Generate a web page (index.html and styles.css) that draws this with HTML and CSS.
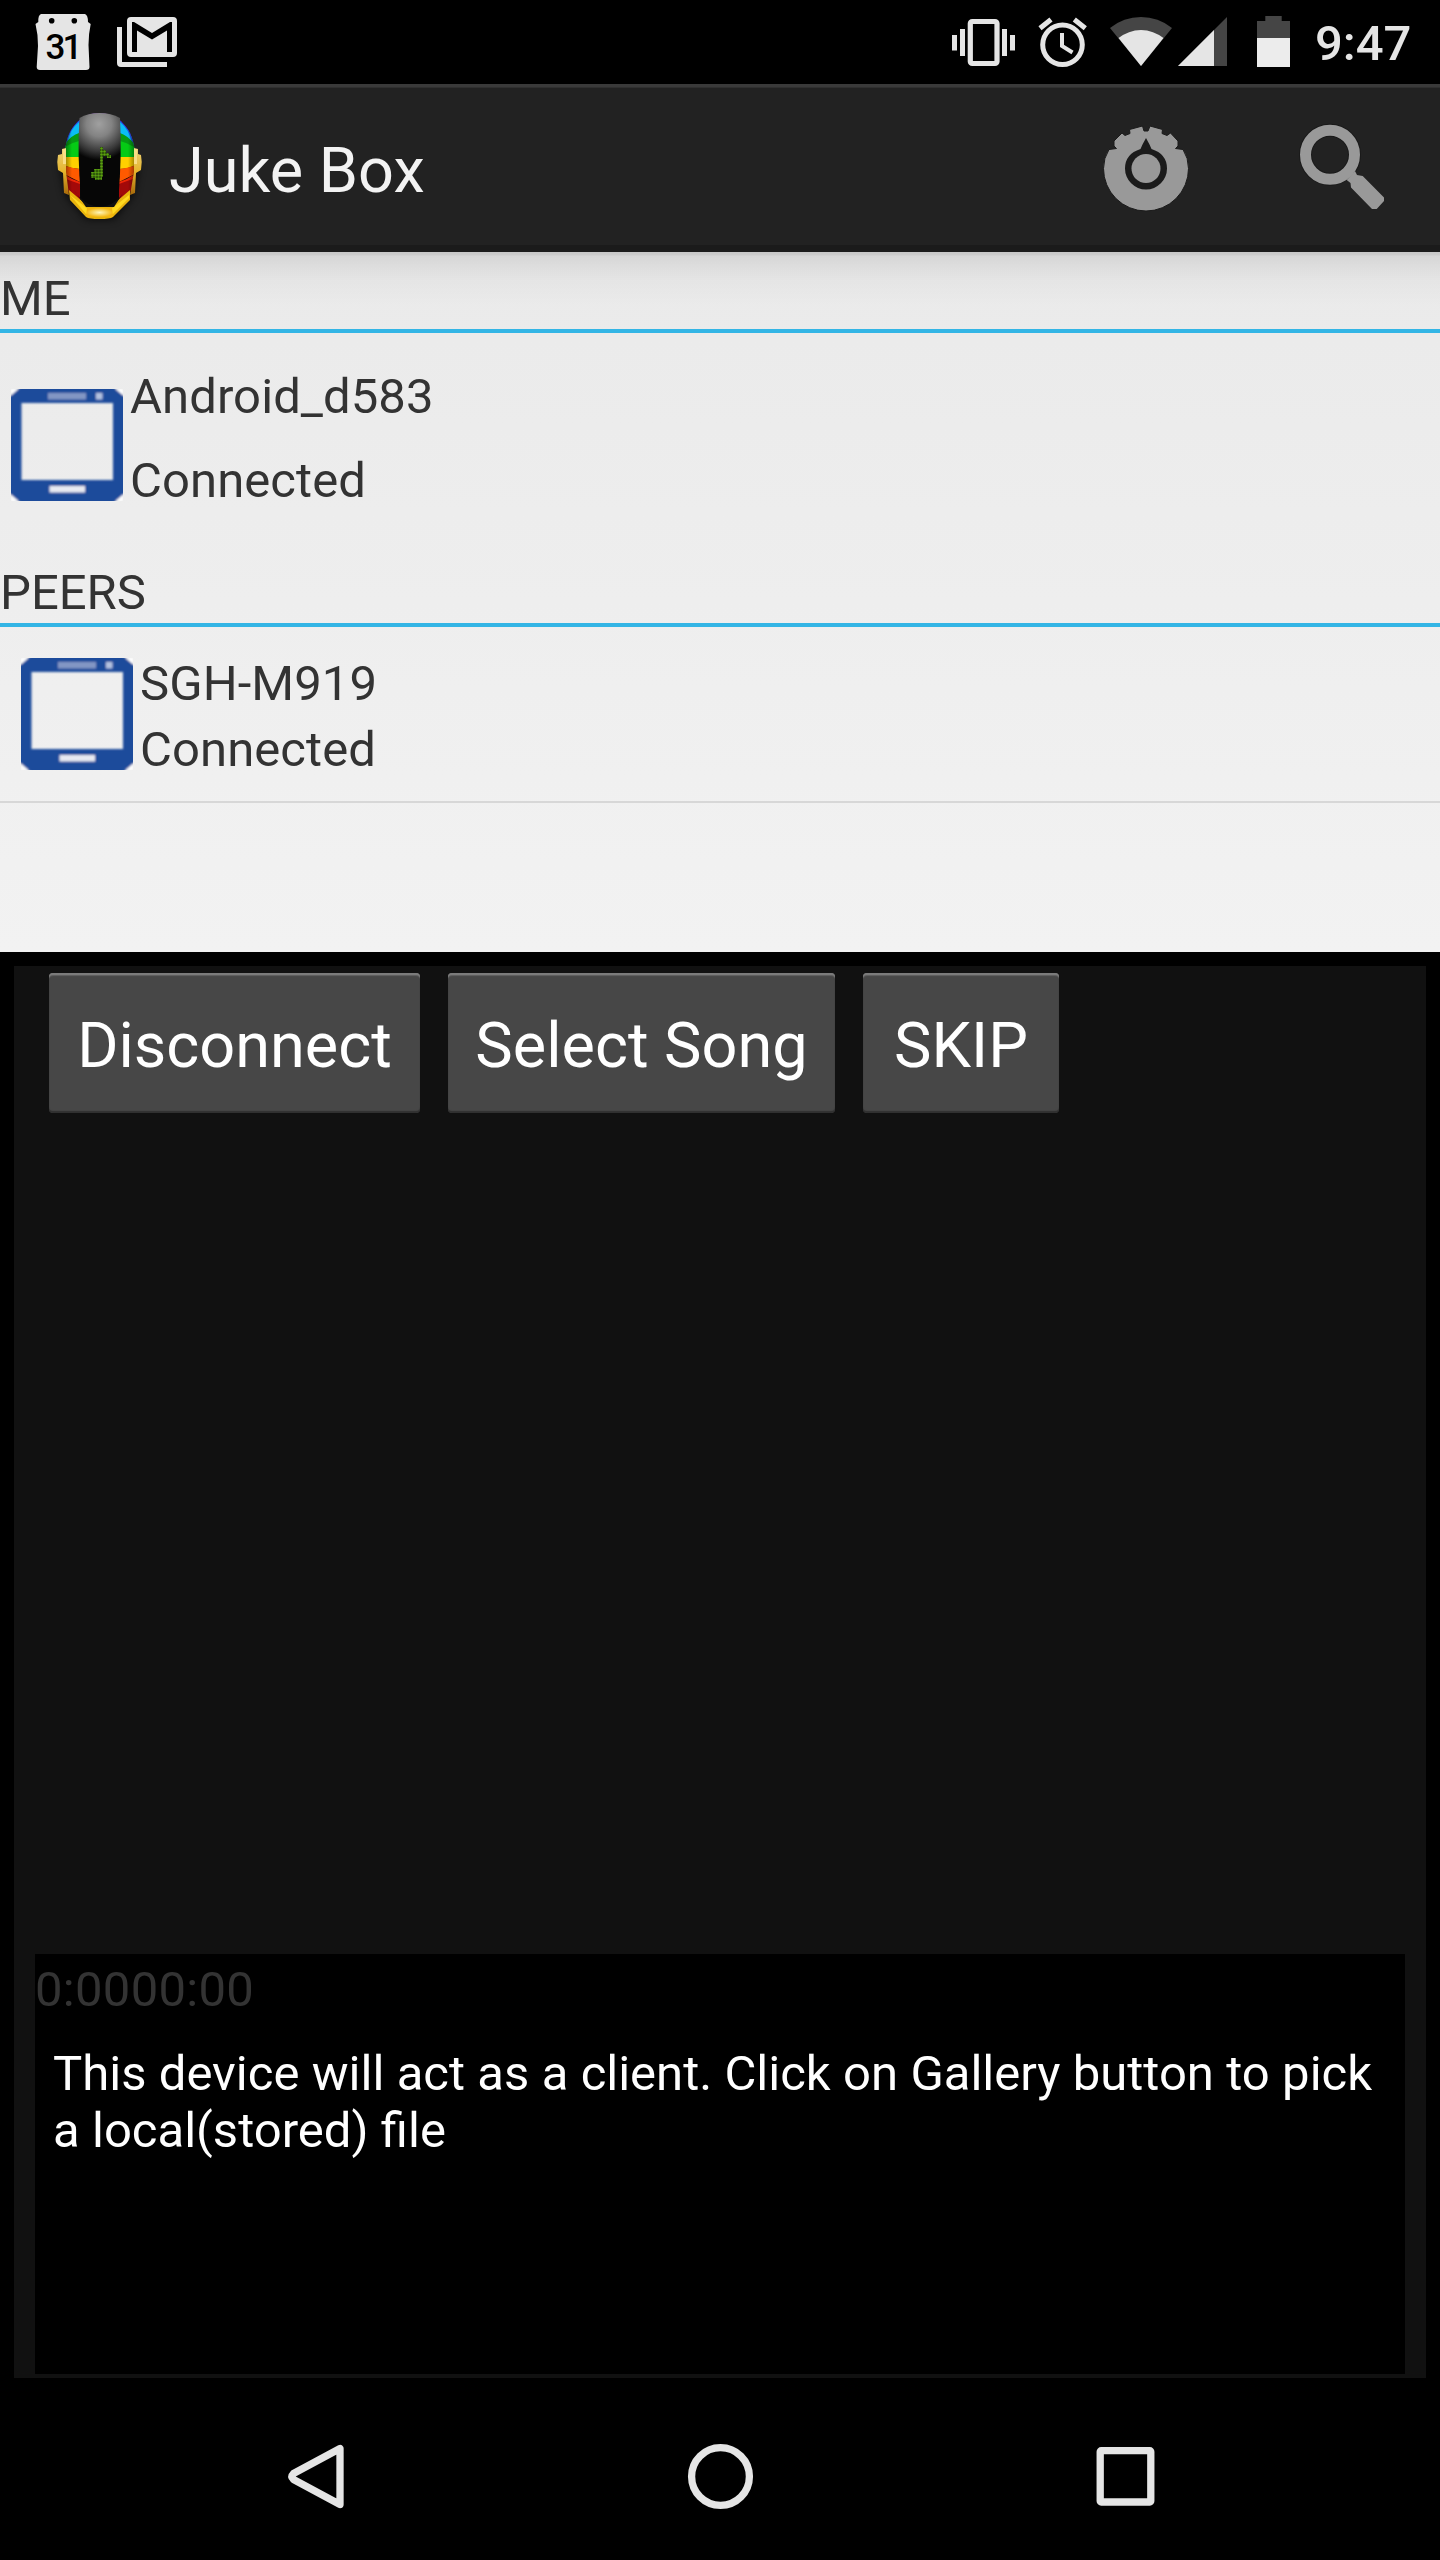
FILE: index.html
```html
<!DOCTYPE html>
<html lang="en">
<head>
<meta charset="utf-8">
<title>Juke Box</title>
<link rel="stylesheet" href="styles.css">
</head>
<body>
<div class="screen">
  <header class="status">
    <svg class="calendar" viewBox="35 0 56 84" width="56" height="84">
      <path fill="#e5e5e5" d="M41 14H85Q88 15 88 22L90.700 24Q88.500 34 88.500 45L89.500 67Q89.500 70 86 70H40Q36.700 70 36.700 67L38 46Q38 34 35.500 24L38.300 22Q38 15 41 14Z"/>
      <circle cx="51.700" cy="20.700" r="2.800"/><circle cx="74.300" cy="20.700" r="2.800"/>
      <text class="calendar-day" x="45.500" y="58.700" textLength="37">31</text>
    </svg>
    <svg class="mail" viewBox="117 0 60 84" width="60" height="84" fill="#e5e5e5">
      <path d="M117 27H122V62H167V67H121Q117 67 117 63Z"/>
      <path fill-rule="evenodd" d="M131 17H173Q177 17 177 21V53Q177 57 173 57H131Q127 57 127 53V21Q127 17 131 17ZM132 22V52H137V30.500L152 39.500L167 30.500V52H172V22H170L152 33L134 22Z"/>
    </svg>
    <span class="spacer"></span>
    <svg class="vibrate" viewBox="952 0 63 84" width="63" height="84" fill="#e5e5e5">
      <rect x="970.300" y="21.500" width="26.700" height="42" rx="2" fill="none" stroke="#e5e5e5" stroke-width="5.200"/>
      <path d="M952 35h5v15.500h-5zM960 29h5v27h-5zM1002 29h5v27h-5zM1010 35h5v15.500h-5z"/>
    </svg>
    <svg class="alarm" viewBox="1038 0 50 84" width="50" height="84" fill="none" stroke="#e5e5e5">
      <circle cx="1062.500" cy="44.700" r="19.800" stroke-width="5"/>
      <path stroke-width="4" d="M1062 33V46L1072.500 52.500"/>
      <path stroke-width="5" d="M1040 28.300L1051 19.500M1085.300 28.300L1074.300 19.500"/>
    </svg>
    <svg class="wifi" viewBox="1110 0 62 84" width="62" height="84">
      <path fill="#454545" d="M1141 66L1110 28A49 49 0 0 1 1172 28Z"/>
      <path fill="#e5e5e5" d="M1141 66L1118.500 38A36 36 0 0 1 1163.500 38Z"/>
    </svg>
    <svg class="signal" viewBox="1178 0 49 84" width="49" height="84">
      <path fill="#454545" d="M1178 66H1227V17Z"/><path fill="#e5e5e5" d="M1178 66H1214V30Z"/>
    </svg>
    <svg class="battery" viewBox="1257 0 33 84" width="33" height="84">
      <path fill="#454545" d="M1257 21H1265.300V16H1281.700V21H1290V38H1257Z"/><path fill="#ececec" d="M1257 38H1290V67H1257Z"/>
    </svg>
    <span class="clock">9:47</span>
  </header>

  <div class="appbar">
    <svg class="logo" viewBox="50 100 98 132" width="98" height="132">
      <defs>
        <radialGradient id="visor" gradientUnits="userSpaceOnUse" cx="99" cy="124" r="36"><stop offset="0" stop-color="#a0a0a0"/><stop offset=".35" stop-color="#838383"/><stop offset=".75" stop-color="#3a3a3a"/><stop offset="1" stop-color="#060606"/></radialGradient>
        <linearGradient id="gold" x1="0" y1="0" x2="0" y2="1"><stop offset="0" stop-color="#ecd27a"/><stop offset=".5" stop-color="#e6b52c"/><stop offset="1" stop-color="#a8690a"/></linearGradient>
        <radialGradient id="chin"><stop offset="0" stop-color="#fff6b8"/><stop offset="1" stop-color="#f3b60f"/></radialGradient>
        <linearGradient id="shade"><stop offset="0" stop-opacity=".4"/><stop offset=".1" stop-opacity="0"/><stop offset=".9" stop-opacity="0"/><stop offset="1" stop-opacity=".4"/></linearGradient>
        <clipPath id="shell"><path d="M99 113C118 113 134 128 135 155V180C134 189 128 196 119 201H80C70 196 65 189 65 180V155C65 130 80 113 99 113Z"/></clipPath>
        <pattern id="led" x="91" y="147" width="3" height="3" patternUnits="userSpaceOnUse"><rect width="3" height="3" fill="#1d3806"/><circle cx="1.500" cy="1.500" r="1.300" fill="#5ba010"/></pattern>
        <filter id="drop" x="-30%" y="-30%" width="160%" height="160%"><feGaussianBlur stdDeviation="4"/></filter>
      </defs>
      <path d="M60 165L66 195L86 219H114L133 195L139 165Z" fill="#000" opacity=".75" filter="url(#drop)"/>
      <g clip-path="url(#shell)">
        <path fill="#6a10b8" d="M60 108H140V140H60Z"/>
        <path fill="#1658e8" d="M60 142L80 119V150H60ZM139 142L119 119V150H139Z"/>
        <path fill="#0bbdf5" d="M67 143Q70 129 79 122V140ZM132 143Q129 129 120 122V140Z"/>
        <path fill="#079b14" d="M60 151Q69 136 79 133V148H60ZM139 151Q130 136 120 133V148H139Z"/>
        <path fill="#05cb15" d="M60 150Q70 143 79 141V158H60ZM139 150Q129 143 120 141V158H139Z"/>
        <path fill="#ffd000" d="M60 157H80V169Q70 169 60 163ZM139 157H119V169Q129 169 139 163Z"/>
        <path fill="#ff5a00" d="M60 164Q70 168 80 169V182L60 172ZM139 164Q129 168 119 169V182L139 172Z"/>
        <path fill="#ef2708" d="M60 171Q70 179 80 182V190L60 177ZM139 171Q129 179 119 182V190L139 177Z"/>
        <path fill="#a30909" d="M60 177Q72 181 80 184V205H60ZM139 177Q127 181 119 184V205H139Z"/>
        <path fill="url(#shade)" d="M65 110H135V205H65Z"/>
      </g>
      <path fill="url(#visor)" d="M79.500 118Q88 113 99.500 113T120 118Q122 155 118.500 197Q112 207 99.500 207T81 197Q77 155 79.500 118Z"/>
      <path fill="url(#led)" d="M100 147H103V150H106V153H109V155H111V158H107V156H103V177H102V180H95V178H91V172H94V169H100Z"/>
      <path fill="url(#gold)" d="M62 149L66 148V172L69 195L64 193L63 173L58 170Q56.500 162 58 155L62 154ZM138 149L134 148V172L130 195L135 193L136 173L141 170Q142.500 162 141 155L138 154Z"/>
      <path fill="#f8dd86" d="M63 149H66V164H63ZM134 149H137V164H134Z"/>
      <path fill="#e9b40d" d="M69 190L89 207H110L130 190V200L113 217Q110 219 99.500 219T86 217L70 200Z"/>
      <path fill="#ffd91f" d="M70 195L88 209H111L129 195V198L113 214H86Z"/>
      <path fill="#101010" d="M74 190Q84 206 99.500 206.500T125 190L114 207H86Z"/>
      <path fill="url(#chin)" d="M87 208H112L113 217H86Z"/>
    </svg>
    <h1 class="title">Juke Box</h1>
    <svg class="discover" viewBox="1100 120 92 96" width="92" height="96">
      <path fill="#999" stroke="#1b1b1b" stroke-width="1" d="M1142.500 126L1144 131H1148L1150 126L1162.500 129.500L1162 133.500L1167 135.500L1170.500 133L1178 141V146L1175.500 148.500L1183 149.500Q1188.500 158 1188.500 168.500A42.500 42.500 0 0 1 1103.500 168.500Q1103.500 158 1109 149.500L1116.500 148.500L1114 146V141L1122 133L1125 135.500L1130 133.500L1129.500 129.500Z"/>
      <path fill="#1b1b1b" d="M1146 138L1142.500 144.500L1140.500 149Q1125 154 1125 168.500A21 21 0 0 0 1167 168.500Q1167 154 1151.500 149L1149.500 144.500Z"/>
      <circle cx="1146" cy="168.500" r="14.500" fill="#999"/>
    </svg>
    <svg class="search" viewBox="1296 120 92 96" width="92" height="96">
      <circle cx="1330" cy="155.700" r="24.500" fill="none" stroke="#1a1a1a" stroke-width="13"/>
      <circle cx="1330" cy="155.700" r="24.500" fill="none" stroke="#999" stroke-width="11"/>
      <path fill="#999" d="M1355 172L1357 176L1362.700 177L1384 198.500V202L1376.700 210H1372L1351 188.500L1350.500 184L1346.700 181Z"/>
    </svg>
  </div>

  <main class="lists">
    <h2 class="heading">ME</h2>
    <section class="me">
      <svg class="device" viewBox="0 0 112 112" width="112" height="112"><use href="#tablet"/></svg>
      <div class="me-text"><p>Android_d583</p><p>Connected</p></div>
    </section>
    <h2 class="heading">PEERS</h2>
    <section class="peer">
      <svg class="device" viewBox="0 0 112 112" width="112" height="112">
        <defs>
          <filter id="soft" x="-5%" y="-5%" width="110%" height="110%"><feGaussianBlur stdDeviation="1.300"/></filter>
          <g id="tablet" filter="url(#soft)">
            <path fill="#fff" d="M0 0H8L0 8ZM112 0H104L112 8ZM0 112V105L8 112ZM112 112V105L104 112Z"/>
            <path fill="#1f4b9b" fill-rule="evenodd" d="M12 -4H100L116 10V102L100 116H12L-4 102V10ZM10.500 14V91H102V14Z"/>
            <path fill="#8296c4" d="M37 4H75V10.500H37Z"/><path fill="#b4c2e0" d="M85 4H91.500V10.500H85Z"/><path fill="#e8eaf2" d="M38.500 97H74V103.500H38.500Z"/>
          </g>
        </defs>
        <use href="#tablet"/>
      </svg>
      <div class="peer-text"><p>SGH-M919</p><p>Connected</p></div>
    </section>
  </main>

  <section class="detail">
    <div class="panel">
      <div class="actions">
        <button class="btn">Disconnect</button>
        <button class="btn btn-select">Select Song</button>
        <button class="btn btn-skip">SKIP</button>
      </div>
      <div class="player">
        <p class="times"><span>0:00</span><span>00:00</span></p>
        <p class="message">This device will act as a client. Click on Gallery button to pick a local(stored) file</p>
      </div>
    </div>
  </section>

  <nav class="navbar">
    <svg viewBox="284 2440 64 72" width="64" height="72"><path d="M340 2448.500V2504.500L293.500 2479.500Q290.500 2476.500 293.500 2473.500Z"/></svg>
    <svg viewBox="684 2440 73 72" width="73" height="72"><circle cx="720.500" cy="2476.500" r="28.900"/></svg>
    <svg viewBox="1093 2440 66 72" width="66" height="72"><rect x="1100.200" y="2450.700" width="50.600" height="51.300" rx="1"/></svg>
  </nav>
</div>
</body>
</html>
```
FILE: styles.css
```css
* { box-sizing: border-box; }
body, h1, h2, p { margin: 0; font-weight: 400; }
body {
  background: #000;
  font-family: Roboto, sans-serif;
  font-size: 49px;
  line-height: 57px;
  color: #333;
}
svg { display: block; flex: none; }
.screen { width: 1440px; height: 2560px; display: flex; flex-direction: column; overflow: hidden; }

.status { height: 84px; flex: none; display: flex; align-items: center; padding: 0 28px 0 35px; }
.calendar-day { font: 500 35px Roboto, sans-serif; }
.mail { margin-left: 26px; }
.spacer { flex: 1; }
.alarm { margin-left: 23px; }
.wifi { margin-left: 22px; }
.signal { margin-left: 6px; }
.battery { margin-left: 30px; }
.clock { width: 97px; margin-left: 25px; color: #e5e5e5; font-weight: 500; padding-top: 3px; white-space: nowrap; }

.appbar {
  height: 168px;
  flex: none;
  display: flex;
  align-items: center;
  padding: 4px 52px 4px 50px;
  background: linear-gradient(#3a3a3a 0 3px, #303030 3px 4px, #222 4px 161px, #1b1b1b 161px);
}
.logo { margin-top: -4px; }
.title { flex: 1; margin-left: 21px; padding-top: 5px; font-size: 63px; line-height: 74px; color: #f3f3f3; }
.search { margin-left: 104px; margin-top: -2px; }

.lists {
  height: 700px;
  flex: none;
  padding-top: 18px;
  background:
    linear-gradient(rgba(0,0,0,.15), rgba(0,0,0,.13) 3px, rgba(0,0,0,.085) 4px, rgba(0,0,0,.06) 13px, rgba(0,0,0,.025) 28px, transparent 54px) top / 100% 60px no-repeat,
    linear-gradient(#eaeaea, #f2f2f2);
}
.heading { height: 63px; border-bottom: 4px solid #33b5e5; font-size: 49px; line-height: 57px; }
.me { display: flex; gap: 7px; height: 231px; padding: 35px 11px 0; }
.me .device { margin-top: 21px; }
.me-text { display: flex; flex-direction: column; gap: 27px; letter-spacing: .08px; }
.peer { display: flex; gap: 7px; height: 176px; padding: 28px 21px 0; border-bottom: 2px solid #d7d7d7; }
.peer .device { margin-top: 3px; }
.peer-text { display: flex; flex-direction: column; gap: 9px; letter-spacing: .08px; }

.detail { height: 1440px; flex: none; padding: 14px; background: #000; }
.panel {
  height: 1412px;
  display: flex;
  flex-direction: column;
  justify-content: space-between;
  padding: 7px 21px 4px;
  background: #111;
}
.actions { display: flex; gap: 28px; padding-left: 14px; }
.btn {
  width: 371px;
  height: 140px;
  padding: 5px 0 0;
  border: 0;
  border-radius: 4px;
  background: #474747;
  box-shadow: inset 0 2px 0 #7b7b7b, inset 0 4px 1px -1px #626262, inset 0 -2px 1px #303030;
  font: 63px/74px Roboto, sans-serif;
  color: #fff;
}
.btn-select { width: 387px; }
.btn-skip { width: 196px; }
.player { height: 420px; background: #000; }
.times { padding-top: 7px; color: #333; letter-spacing: .3px; }
.message { padding: 27px 16px 0 18px; color: #fff; word-spacing: .2px; }

.navbar { height: 168px; flex: none; display: flex; align-items: center; padding: 0 281px 0 284px; justify-content: space-between; }
.navbar svg { fill: none; stroke: #e5e5e5; stroke-width: 7.300px; stroke-linejoin: round; }
```
